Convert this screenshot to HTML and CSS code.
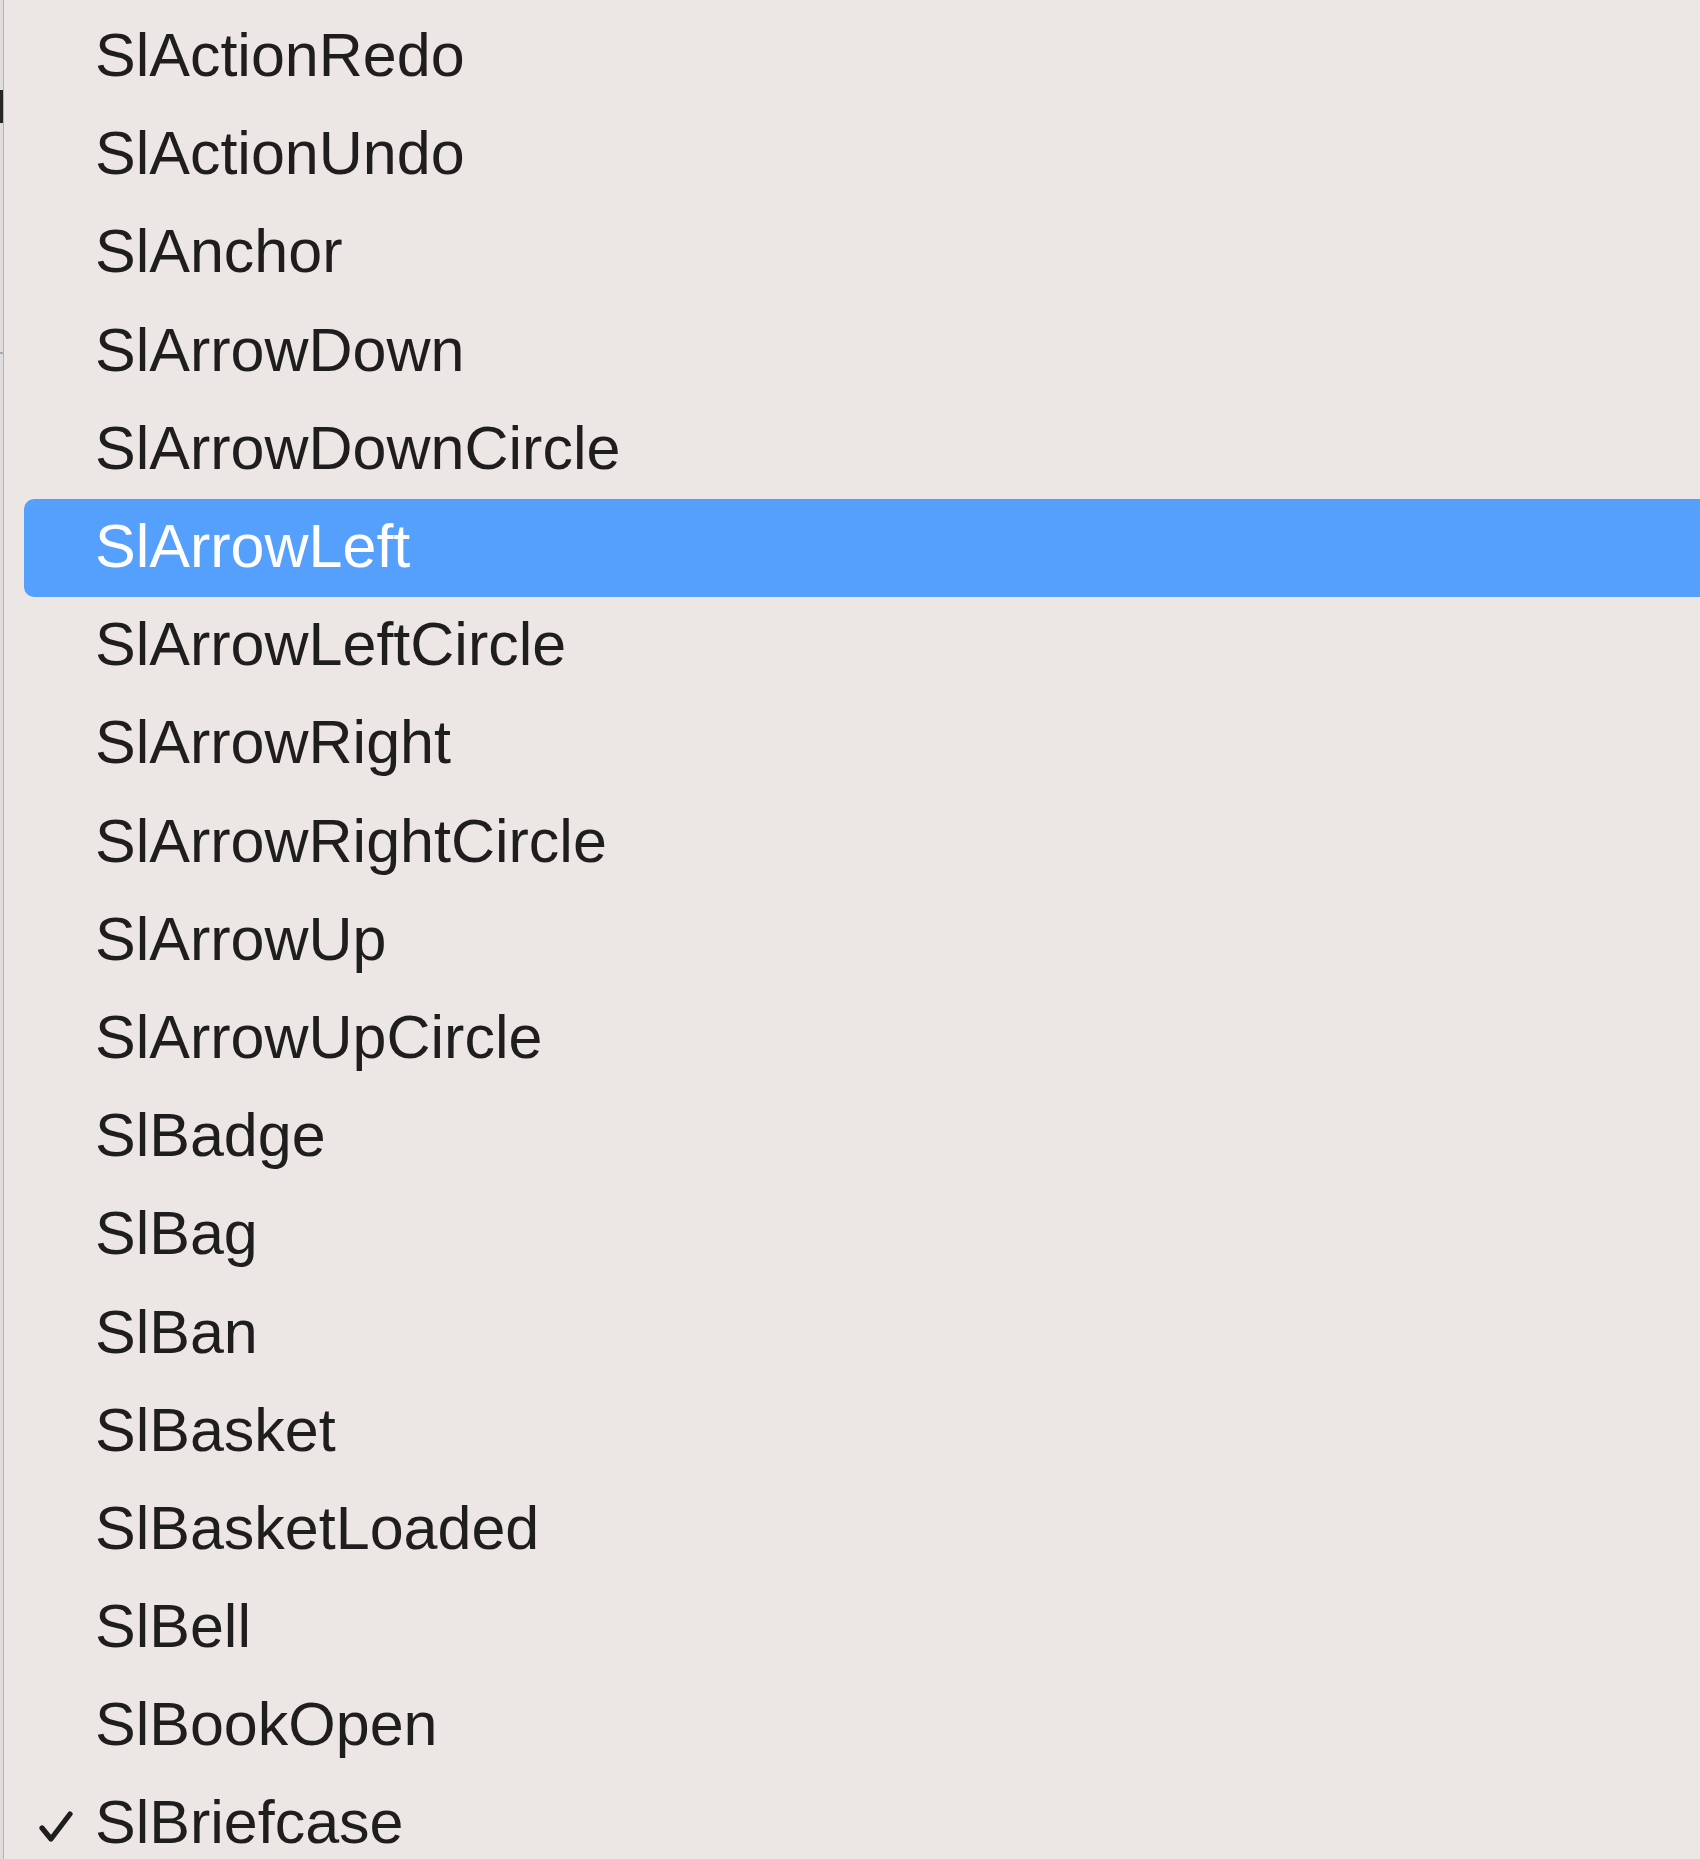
FILE: index.html
```html
<!DOCTYPE html>
<html>
<head>
<meta charset="utf-8">
<link rel="stylesheet" href="styles.css">
</head>
<body>
<div class="window">
  <div class="edge">
    <div class="edge-mark"></div>
    <div class="edge-tick"></div>
  </div>
  <ul class="menu">
    <li class="item"><span class="check"></span><span class="label">SlActionRedo</span></li>
    <li class="item"><span class="check"></span><span class="label">SlActionUndo</span></li>
    <li class="item"><span class="check"></span><span class="label">SlAnchor</span></li>
    <li class="item"><span class="check"></span><span class="label">SlArrowDown</span></li>
    <li class="item"><span class="check"></span><span class="label">SlArrowDownCircle</span></li>
    <li class="item active"><span class="check"></span><span class="label">SlArrowLeft</span></li>
    <li class="item"><span class="check"></span><span class="label">SlArrowLeftCircle</span></li>
    <li class="item"><span class="check"></span><span class="label">SlArrowRight</span></li>
    <li class="item"><span class="check"></span><span class="label">SlArrowRightCircle</span></li>
    <li class="item"><span class="check"></span><span class="label">SlArrowUp</span></li>
    <li class="item"><span class="check"></span><span class="label">SlArrowUpCircle</span></li>
    <li class="item"><span class="check"></span><span class="label">SlBadge</span></li>
    <li class="item"><span class="check"></span><span class="label">SlBag</span></li>
    <li class="item"><span class="check"></span><span class="label">SlBan</span></li>
    <li class="item"><span class="check"></span><span class="label">SlBasket</span></li>
    <li class="item"><span class="check"></span><span class="label">SlBasketLoaded</span></li>
    <li class="item"><span class="check"></span><span class="label">SlBell</span></li>
    <li class="item"><span class="check"></span><span class="label">SlBookOpen</span></li>
    <li class="item selected"><span class="check"><svg class="check-icon" width="40" height="40" viewBox="0 0 40 40"><path d="M5 21 L14 32 L33 7" fill="none" stroke="#1f1e1e" stroke-width="5.2" stroke-linecap="round" stroke-linejoin="round"/></svg></span><span class="label">SlBriefcase</span></li>
  </ul>
</div>
</body>
</html>
```

FILE: styles.css
```css
html, body {
  margin: 0;
  padding: 0;
  background: #ece7e4;
  overflow: hidden;
}

.window {
  display: flex;
  width: 1700px;
  height: 1859px;
  overflow: hidden;
}

.edge {
  flex: 0 0 3px;
  width: 3px;
  border-right: 1px solid #b4b4b8;
  background: #dedcdc;
  display: flex;
  flex-direction: column;
}

.edge-mark {
  margin-top: 90px;
  height: 33px;
  background: #262626;
}

.edge-tick {
  margin-top: 229px;
  height: 2px;
  background: #a9abb3;
}

.menu {
  flex: 1;
  list-style: none;
  margin: 0;
  padding: 8px 0 0 20px;
  display: flex;
  flex-direction: column;
}

.item {
  flex: 0 0 auto;
  height: 98.2px;
  box-sizing: border-box;
  padding: 0 0 4px 16px;
  display: grid;
  grid-template-columns: 55px 1fr;
  align-items: center;
  font-family: "Liberation Sans", Arial, sans-serif;
  font-size: 61px;
  line-height: 94px;
  color: #1f1e1e;
  border-radius: 10px 0 0 10px;
  white-space: nowrap;
}

.item.active {
  background: #559ffd;
  color: #ffffff;
}

.check {
  align-self: start;
  line-height: 0;
  padding-top: 32px;
}

.check-icon {
  display: block;
  margin-left: -3px;
}
```
